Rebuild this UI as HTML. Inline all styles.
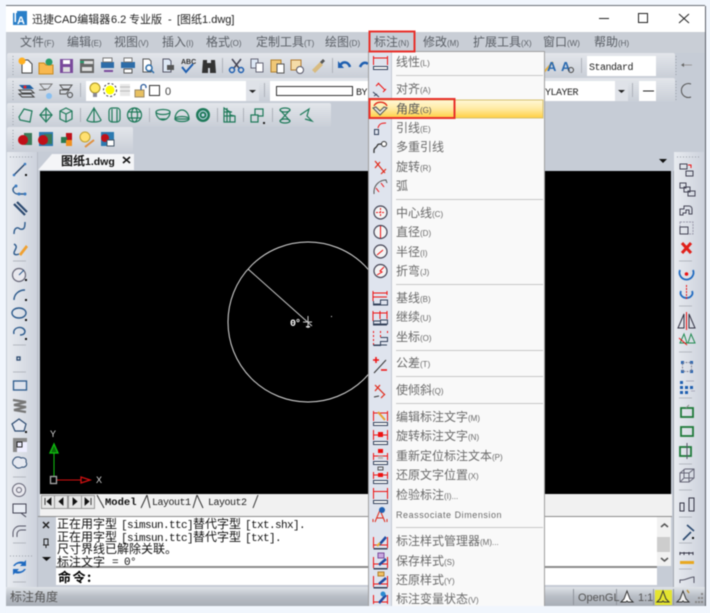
<!DOCTYPE html>
<html><head><meta charset="utf-8"><style>
html,body{margin:0;padding:0;width:710px;height:613px;overflow:hidden;background:#f1f6fd}
svg{position:absolute;left:0;top:0;filter:blur(.4px)}
text{font-family:"Liberation Sans","Noto Sans CJK SC",sans-serif}
.m{font-size:12px;fill:#5a5f66}.m tspan{font-size:8px}
.i{font-size:12px;fill:#6a6a6a}.i tspan{font-size:8px}
.c{font-size:12px;fill:#111;font-family:"Noto Sans CJK SC",sans-serif}
.t{font-size:11px;letter-spacing:-.6px;fill:#111;font-family:"Liberation Mono",monospace}
.u{font-size:10px;letter-spacing:-.5px;fill:#222;font-family:"Liberation Mono",monospace}
.s{stroke:#1f7a5a;stroke-width:1.2;fill:none}
.n{stroke:#333;stroke-width:1;fill:none}
.b{stroke:#2c5a8c;stroke-width:1.4;fill:none}
.r{stroke:#e11;stroke-width:1;fill:none}
.d{stroke:#33415a;stroke-width:1;fill:none}
.sp{stroke:#b4b8c0;stroke-width:1}
.ms{stroke:#c8c8c8;stroke-width:1}
</style></head><body>
<svg width="710" height="613" viewBox="0 0 710 613" xmlns="http://www.w3.org/2000/svg">
<defs>
<linearGradient id="tb" x1="0" y1="0" x2="0" y2="1"><stop offset="0" stop-color="#e3e6eb"/><stop offset="1" stop-color="#c9ced7"/></linearGradient>
<linearGradient id="lt" x1="0" y1="0" x2="1" y2="0"><stop offset="0" stop-color="#e8ebf0"/><stop offset="1" stop-color="#cdd2dc"/></linearGradient>
<linearGradient id="st" x1="0" y1="0" x2="0" y2="1"><stop offset="0" stop-color="#dfe3e8"/><stop offset=".5" stop-color="#b8bdc5"/><stop offset="1" stop-color="#a9aeb6"/></linearGradient>
<linearGradient id="hl" x1="0" y1="0" x2="0" y2="1"><stop offset="0" stop-color="#fff8d8"/><stop offset=".5" stop-color="#ffeaa0"/><stop offset="1" stop-color="#ffcf40"/></linearGradient>
</defs>

<!-- window -->
<rect x="6" y="5" width="699" height="601" fill="#c6ccd6"/>
<rect x="6" y="5" width="699" height="1" fill="#6c7078"/>
<rect x="705" y="6" width="1" height="600" fill="#5c6068"/>
<rect x="6" y="6" width="699" height="26" fill="#fff"/>
<!-- title -->
<rect x="13" y="11" width="14" height="14" fill="#2a7fc8"/><rect x="13" y="11" width="4" height="2" fill="#fff"/><rect x="14.500" y="13" width="1.500" height="9" fill="#fff"/>
<text x="17" y="24" style="font-size:11px;fill:#fff;font-weight:bold">A</text>
<g fill="#222">
<text x="32" y="23" style="font-size:11px">迅捷CAD编辑器</text>
<text x="111" y="23" style="font-size:11px">6.2</text>
<text x="129" y="23" style="font-size:11px">专业版</text>
<text x="168" y="23" style="font-size:11px">-</text>
<text x="177" y="23" style="font-size:11px">[图纸1.dwg]</text>
</g>
<path d="M599 18.500H609" stroke="#222"/><rect x="638.500" y="13.500" width="9" height="9" fill="none" stroke="#222"/><path d="M679 14L689 23M689 14L679 23" stroke="#222"/>
<!-- menubar -->
<rect x="6" y="32" width="699" height="21" fill="#c9ced6"/>
<text class="m" x="20" y="46">文件<tspan>(F)</tspan></text>
<text class="m" x="67" y="46">编辑<tspan>(E)</tspan></text>
<text class="m" x="114" y="46">视图<tspan>(V)</tspan></text>
<text class="m" x="162" y="46">插入<tspan>(I)</tspan></text>
<text class="m" x="206" y="46">格式<tspan>(O)</tspan></text>
<text class="m" x="256" y="46">定制工具<tspan>(T)</tspan></text>
<text class="m" x="325" y="46">绘图<tspan>(D)</tspan></text>
<text class="m" x="374" y="46">标注<tspan>(N)</tspan></text>
<text class="m" x="423" y="46">修改<tspan>(M)</tspan></text>
<text class="m" x="473" y="46">扩展工具<tspan>(X)</tspan></text>
<text class="m" x="543" y="46">窗口<tspan>(W)</tspan></text>
<text class="m" x="594" y="46">帮助<tspan>(H)</tspan></text>

<!-- toolbars bg -->
<rect x="7" y="53" width="668" height="25" rx="2" fill="url(#tb)"/>
<rect x="7" y="78" width="668" height="24" rx="2" fill="url(#tb)"/>
<rect x="7" y="103" width="324" height="24" rx="2" fill="url(#tb)"/>
<rect x="7" y="127" width="126" height="25" rx="2" fill="url(#tb)"/>
<path d="M13 56V75M13 81V100M13 106V125M13 130V149M676 56V75M676 81V100" stroke="#9aa0a8" stroke-dasharray="1 2"/>

<!-- row1 -->
<g>
<path d="M22 60h6l4 4v9H22z" fill="#fff" stroke="#444"/><circle cx="22" cy="61" r="3.500" fill="#ffb020"/>
<path d="M39 63h5l2 2h7v9H39z" fill="#f8b850" stroke="#c88a20"/><circle cx="49" cy="62" r="3.500" fill="#2a9a6a"/>
<rect x="60" y="59" width="13" height="14" fill="#7a4a9c"/><rect x="63" y="60" width="7" height="4" fill="#fff"/><rect x="63" y="67" width="7" height="5" fill="#ddd"/>
<rect x="80" y="59" width="14" height="14" fill="#666"/><rect x="84" y="61" width="9" height="3" fill="#ddd"/><rect x="82" y="67" width="10" height="4" fill="#ddd"/><path d="M80 62h4" stroke="#2a9a6a" stroke-width="2"/>
<rect x="101" y="62" width="13" height="6" fill="#2c6ca8"/><rect x="103" y="58" width="9" height="4" fill="#fff" stroke="#777"/><path d="M104 71h9" stroke="#7a4a9c" stroke-width="2"/>
<rect x="121" y="62" width="14" height="6" fill="#2c6ca8"/><rect x="124" y="58" width="8" height="4" fill="#fff" stroke="#777"/><rect x="124" y="69" width="8" height="4" fill="#fff" stroke="#555"/>
<path d="M143 59h6l2 2v11h-8z" fill="#fff" stroke="#555"/><circle cx="149" cy="68" r="3" fill="#fff" stroke="#2c6ca8" stroke-width="1.500"/><path d="M151 70l3 3" stroke="#2c6ca8" stroke-width="1.500"/>
<path d="M163 59h6l2 2v11h-8z" fill="#dde8f5" stroke="#556"/><rect x="167" y="65" width="7" height="5" fill="#555"/>
<text x="181" y="64" style="font-size:7px;font-weight:bold;fill:#333">ABC</text><path d="M182 67l4 5 7-8" stroke="#1f5fb0" stroke-width="2" fill="none"/>
<path d="M203 60h4v3h4v-3h4l1 13h-6v-5h-2v5h-6z" fill="#333"/>
<rect x="222" y="58" width="1" height="15" fill="#aeb2ba"/>
<path d="M232 59l7 9M241 59l-7 9" stroke="#445" stroke-width="1.500"/><circle cx="232" cy="70" r="2.500" fill="none" stroke="#1f5fb0" stroke-width="1.500"/><circle cx="241" cy="70" r="2.500" fill="none" stroke="#1f5fb0" stroke-width="1.500"/>
<rect x="251" y="59" width="7" height="9" fill="#dde8f5" stroke="#667"/><rect x="256" y="63" width="7" height="9" fill="#fff" stroke="#667"/>
<rect x="271" y="60" width="10" height="12" fill="#f0c878" stroke="#b08030"/><rect x="277" y="64" width="7" height="9" fill="#fff" stroke="#555"/>
<rect x="291" y="60" width="10" height="10" fill="#f5dca8" stroke="#b07a30"/><circle cx="300" cy="70" r="3.500" fill="#fff" stroke="#556"/>
<path d="M312 70l8-8 3 3-8 8z" fill="#d8bb80"/><path d="M320 62l3-3 2 2-3 3z" fill="#555"/>
<rect x="332" y="58" width="1" height="15" fill="#aeb2ba"/>
<path d="M340 66c2-5 8-5 10 1" stroke="#1f5fb0" stroke-width="2.500" fill="none"/><path d="M338 61v7h6z" fill="#1f5fb0"/>
<path d="M360 67c2-5 6-5 8-3" stroke="#1f5fb0" stroke-width="2.500" fill="none"/>
<path d="M544 72l9-10" stroke="#e8b040" stroke-width="2"/><text x="547" y="71" style="font-size:13px;font-weight:bold;fill:#2a6ab0">A</text>
<text x="561" y="71" style="font-size:13px;font-weight:bold;fill:#2a6ab0">A</text><circle cx="571" cy="70" r="2.500" fill="none" stroke="#444"/>
<rect x="581" y="58" width="1" height="15" fill="#aeb2ba"/>
<rect x="587" y="56" width="69" height="20" fill="#fff"/>
<text class="u" x="589" y="70">Standard</text>
<path d="M682 65h10" stroke="#999"/><path d="M681 65l3-2v4z" fill="#666"/>
</g>

<!-- row2 -->
<g>
<path d="M19 85l11 0 4 4-11 0z" fill="#1f5fa0"/><circle cx="25" cy="87" r="1.500" fill="#e22"/><path d="M19 90h12l3 3H22zM19 94h12l3 3H22z" fill="none" stroke="#444"/>
<path d="M40 84h12l-4 5H44z" fill="none" stroke="#777"/><circle cx="49" cy="96" r="3" fill="#8ac0f0"/><path d="M39 90h7" stroke="#777"/>
<path d="M60 85h12l-3 4H63zM60 90h9l-3 4h-6z" fill="none" stroke="#555"/><circle cx="70" cy="95" r="2.500" fill="none" stroke="#444"/>
<rect x="80" y="83" width="1" height="14" fill="#aeb2ba"/>
<rect x="86" y="81" width="173" height="20" fill="#fff"/>
<rect x="246" y="81" width="13" height="20" fill="#dfe2e8"/><path d="M249 90h7l-3.500 3z" fill="#222"/>
<circle cx="95" cy="88" r="5" fill="#ffe860" stroke="#a89020"/><rect x="93" y="93" width="4" height="4" fill="#889"/>
<circle cx="110" cy="90" r="4.500" fill="#ff0"/><circle cx="110" cy="90" r="6.500" fill="none" stroke="#333" stroke-dasharray="2 2"/>
<rect x="120" y="84" width="10" height="12" fill="#e8e8e8"/><path d="M120 87h10M120 91h10" stroke="#bbb"/>
<rect x="135" y="90" width="9" height="7" fill="#e8c060" stroke="#986"/><path d="M141 90v-3a2.500 2.500 0 0 1 5 0v1" stroke="#2a5a9a" fill="none" stroke-width="1.300"/>
<rect x="149.500" y="85.500" width="10" height="10" fill="#fff" stroke="#333"/>
<text x="165" y="95" style="font-size:11px;fill:#444">0</text>
<rect x="264" y="83" width="1" height="14" fill="#aeb2ba"/>
<rect x="270" y="81" width="99" height="20" fill="#fff"/>
<rect x="276.500" y="86.500" width="76" height="9" fill="#fff" stroke="#333"/>
<text class="u" x="356" y="95">BY</text>
<rect x="544" y="81" width="84" height="20" fill="#fff"/>
<text class="u" x="545" y="95">YLAYER</text>
<rect x="615" y="81" width="13" height="20" fill="#dfe2e8"/><path d="M618 90h7l-3.500 3z" fill="#222"/>
<rect x="632" y="83" width="1" height="14" fill="#aeb2ba"/>
<rect x="639" y="81" width="17" height="20" fill="#fff"/><path d="M643 91h11" stroke="#222"/>
<path d="M691 84a7 7 0 1 0 0 13" stroke="#555" fill="none"/>
</g>

<!-- row3 -->
<g>
<path d="M24 109l8 2-2 11-10-2-1-3z" class="s"/>
<path d="M46 108l6 7-6 7-6-7zM46 108v14M40 115h12" class="s"/>
<path d="M66 108l6 3v8l-6 3-6-3v-8zM60 111l6 3 6-3M66 114v8" class="s"/>
<rect x="80" y="108" width="1" height="14" fill="#aeb2ba"/>
<path d="M94 108l7 12a7 2 0 0 1-14 0zM94 108v14" class="s"/>
<rect x="109" y="108" width="11" height="14" rx="3" class="s"/><path d="M112 109v13M117 109v13" class="s"/>
<circle cx="134.500" cy="115" r="7" class="s"/><ellipse cx="134.500" cy="115" rx="3" ry="7" class="s"/><path d="M128 112h13M128 118h13" class="s"/>
<rect x="149" y="108" width="1" height="14" fill="#aeb2ba"/>
<ellipse cx="163" cy="112" rx="7" ry="2.500" class="s"/><path d="M156 112a7 8 0 0 0 14 0M159 119h8" class="s"/>
<path d="M175 119a7 9 0 0 1 14 0z" class="s"/><ellipse cx="182" cy="119" rx="7" ry="2.500" class="s"/>
<circle cx="203" cy="115" r="7" fill="#1f7a5a"/><circle cx="203" cy="115" r="4" fill="none" stroke="#cde"/><circle cx="203" cy="115" r="1.500" fill="#cde"/>
<rect x="217" y="108" width="1" height="14" fill="#aeb2ba"/>
<path d="M224 108v14h11v-6l-5-1v-3l-3-2zM224 112h8M224 116h10M227 108v14M230 111v11" class="s"/>
<rect x="243" y="108" width="1" height="14" fill="#aeb2ba"/>
<path d="M251 115h7v7h-7zM255 115v-6h8v7h-5" class="s"/><rect x="263" y="122" width="2" height="2" fill="#222"/>
<rect x="272" y="108" width="1" height="14" fill="#aeb2ba"/>
<ellipse cx="285" cy="110" rx="5" ry="2" class="s"/><ellipse cx="285" cy="121" rx="5" ry="2" class="s"/><path d="M280 110l10 11M290 110l-10 11" class="s"/>
<path d="M300 115l9-6-2 7 5 5-7-2" class="s"/>
</g>

<!-- row4 -->
<g>
<rect x="24" y="133" width="8" height="12" fill="#3a7a58"/><circle cx="23" cy="140" r="5" fill="#c01018"/>
<rect x="39" y="132" width="14" height="14" fill="#2c7ab0"/><rect x="44" y="134" width="8" height="10" fill="#3a7a58"/><circle cx="43" cy="140" r="5" fill="#c01018"/>
<rect x="66" y="133" width="6" height="7" fill="#c01018"/><rect x="61" y="137" width="6" height="6" fill="#2a7a50"/><rect x="66" y="140" width="6" height="6" fill="#f09020"/>
<circle cx="85" cy="137" r="5" fill="#ffe070" stroke="#c0a030"/><path d="M85 147l9-7" stroke="#e09040" stroke-width="2"/>
<rect x="101" y="132" width="13" height="14" fill="#2c7ab0"/><circle cx="105" cy="138" r="4" fill="#c01018"/><rect x="107" y="140" width="7" height="6" fill="#fff" stroke="#456"/>
</g>

<!-- tab row -->
<rect x="6" y="152" width="699" height="19" fill="#c6ccd6"/>
<path d="M38 170l14-16h82v16z" fill="#f4f5f7"/>
<text x="61" y="165" style="font-size:12px;font-weight:bold;fill:#111">图纸<tspan style="font-size:10.500px">1.dwg</tspan></text>
<path d="M123 157l7 6M130 157l-7 6" stroke="#111" stroke-width="1.500"/>
<path d="M659 159h8l-4 4z" fill="#111"/>

<!-- canvas -->
<rect x="40" y="171" width="631" height="323" fill="#000"/>
<circle cx="308" cy="322" r="80" fill="none" stroke="#ddd"/>
<path d="M248 269L312 326M308 316v12M303 322h9" stroke="#ccc"/><rect x="306" y="326" width="4" height="1.500" fill="#ddd"/><rect x="331" y="316" width="1" height="1" fill="#ddd"/>
<text x="290" y="326" style="font-size:10px;fill:#fff;font-weight:bold;letter-spacing:-1px;font-family:'Liberation Mono',monospace">0°</text>
<!-- ucs -->
<path d="M54 477V453" stroke="#10c010"/><path d="M54 444l4 9h-8z" fill="#0a6a0a" stroke="#10c010" stroke-width="1.300"/>
<path d="M57 480H81" stroke="#d01010"/><path d="M90 480l-9-3v6z" fill="none" stroke="#d01010" stroke-width="1.300"/>
<rect x="50.500" y="476.500" width="6" height="7" fill="none" stroke="#aaa" stroke-width="1.300"/>
<text x="50" y="437" style="font-size:9px;fill:#ddd">Y</text><text x="96" y="483" style="font-size:9px;fill:#ddd">X</text>

<!-- layout tabs -->
<rect x="38" y="494" width="634" height="22" fill="#f1f1f1"/>
<rect x="38" y="494" width="2" height="22" fill="#c6ccd6"/>
<g fill="#e6e6e6" stroke="#999"><rect x="41.500" y="495.500" width="13" height="13"/><rect x="54.500" y="495.500" width="13" height="13"/><rect x="68.500" y="495.500" width="13" height="13"/><rect x="81.500" y="495.500" width="13" height="13"/></g>
<path d="M45 498v7M51 498l-4 3.500 4 3.500zM63 498l-4 3.500 4 3.500zM73 498l4 3.500-4 3.500zM85 498l4 3.500-4 3.500zM91 498v7" fill="#111" stroke="#111" stroke-width=".8"/>
<path d="M97 495l7 13M147 495l-6 13M147 495l3 13M197 495l-4 13M197 495l6 13M258 495l-5 13" stroke="#333" fill="none"/>
<text x="105" y="505" style="font-size:10.500px;font-weight:bold;fill:#111;font-family:'Liberation Mono',monospace">Model</text>
<text x="152" y="505" class="u">Layout1</text>
<text x="208" y="505" class="u">Layout2</text>

<!-- command -->
<rect x="38" y="516" width="634" height="71" fill="#c6ccd6"/>
<rect x="56" y="516" width="601" height="51" fill="#fff"/>
<rect x="56" y="568" width="601" height="17" fill="#fff"/>
<rect x="38" y="516" width="634" height="1" fill="#8c8c8c"/>
<rect x="56" y="566" width="601" height="2" fill="#8c8c8c"/>
<path d="M43 522l6 6M49 522l-6 6" stroke="#222" stroke-width="1.500"/>
<path d="M44 539h4v6h-4zM46 545v3M43 545h6" stroke="#222" fill="none"/>
<path d="M42 557h9l-4.500 4z" fill="#111"/>
<g>
<text class="c" x="57" y="528">正在用字型</text><text class="t" x="121" y="528">[simsun.ttc]</text><text class="c" x="193" y="528">替代字型</text><text class="t" x="245" y="528">[txt.shx].</text>
<text class="c" x="57" y="541">正在用字型</text><text class="t" x="121" y="541">[simsun.ttc]</text><text class="c" x="193" y="541">替代字型</text><text class="t" x="245" y="541">[txt].</text>
<text class="c" x="57" y="553">尺寸界线已解除关联。</text>
<text class="c" x="57" y="566">标注文字</text><text class="t" x="112" y="565">= 0°</text>
<text class="c" x="58" y="582" style="font-weight:bold;font-size:13px;letter-spacing:1.500px;fill:#000">命令:</text>
</g>
<!-- scrollbar -->
<rect x="657" y="517" width="14" height="49" fill="#f1f1f1"/>
<rect x="657" y="537" width="13" height="15" fill="#cdcdcd"/>
<path d="M661 527l3.500-3 3.500 3M661 558l3.500 3 3.500-3" stroke="#555" stroke-width="1.500" fill="none"/>

<!-- left toolbar -->
<rect x="7" y="152" width="30" height="435" fill="url(#lt)"/>
<rect x="37" y="152" width="1" height="435" fill="#b8bdc6"/>
<path d="M10 157H34M10 556H34" stroke="#9aa0a8" stroke-dasharray="1 2"/>
<g class="sep"><path class="sp" d="M13 261H26M13 345H26M13 372H26M13 477H26M13 543H26M13 582H26"/></g>
<g>
<path d="M14 175l11-11" stroke="#2c4a70" stroke-width="1.500"/><circle cx="14" cy="175" r="1.300" fill="#3a7ac0"/><circle cx="25" cy="164" r="1.300" fill="#3a7ac0"/><rect x="25" y="174" width="2" height="2" fill="#111"/>
<path d="M16 186c-6 3-2 8 2 8h7" class="b"/><circle cx="16" cy="186" r="1.500" fill="#3a7ac0"/><circle cx="19" cy="194" r="1.500" fill="#3a7ac0"/><circle cx="25" cy="194" r="1.500" fill="#3a7ac0"/>
<path d="M14 204l11 11M17 202l10 10" stroke="#2c4a70" stroke-width="2.200"/>
<path d="M14 234c0-7 4-7 6-5 4 1 5-1 5-7" class="b"/>
<path d="M14 244c5 3 0 6 0 9 0 2 3 2 5 1" class="b"/><path d="M19 254l7-9 2 2-7 9z" fill="#f0a030"/>
<circle cx="19" cy="275" r="6.500" fill="#e8e8ee" stroke="#667" stroke-width="1.200"/><path d="M19 275l5-5" stroke="#2c5a8c"/><rect x="25" y="279" width="2" height="2" fill="#111"/>
<path d="M14 300c0-6 5-10 11-10" class="b"/><rect x="25" y="299" width="2" height="2" fill="#111"/>
<ellipse cx="19" cy="313" rx="7" ry="5" class="b"/><rect x="25" y="319" width="2" height="2" fill="#111"/>
<path d="M14 334c-2-7 9-9 11-3 0 3-2 4-5 4" class="b"/><rect x="25" y="338" width="2" height="2" fill="#111"/>
<rect x="17" y="357" width="3" height="3" fill="none" stroke="#2c4a70" stroke-width="1.300"/>
<rect x="13.500" y="381" width="13" height="9" fill="#dde2ec" stroke="#2c5a8c" stroke-width="1.300"/>
<path d="M13 400l13 2-12 3 12 2-12 3 12 2" stroke="#777" stroke-width="2.200" fill="none"/>
<path d="M19 419l7 5-2 7H15l-3-7z" fill="#e5e8f0" stroke="#2c4a70" stroke-width="1.200"/><rect x="25" y="431" width="2" height="2" fill="#111"/>
<rect x="13" y="438" width="14" height="14" fill="#888"/><path d="M17 442h10v10H17z" fill="#eef"/><rect x="17" y="442" width="5" height="5" fill="none" stroke="#222"/>
<path d="M14 459c2-3 6-2 7-1 3-1 6 1 5 4 2 3-1 6-4 5-3 2-6 1-7-1-3-1-3-5-1-7z" fill="#e5e8f0" stroke="#2c4a70"/>
<circle cx="19" cy="490" r="6.500" fill="#e8e8ee" stroke="#667"/><circle cx="19" cy="490" r="2.500" fill="none" stroke="#667"/>
<rect x="13" y="504" width="13" height="9" fill="#e8ecf3" stroke="#445"/><path d="M21 513l5 4" stroke="#445"/>
<path d="M13 537v-4a7 7 0 0 1 7-7h6M17 537v-3a4 4 0 0 1 4-4h5" stroke="#556" fill="none"/>
<path d="M13 566c3-5 9-5 11-4l2-2v6h-6l2-2c-3-1-6 0-7 2zM26 569c-3 5-9 5-11 4l-2 2v-6h6l-2 2c3 1 6 0 7-2z" fill="#1f6ac0"/>
</g>

<!-- right toolbar -->
<rect x="674" y="152" width="30" height="435" fill="url(#lt)"/>
<rect x="673" y="171" width="1" height="416" fill="#a4a9b2"/>
<path d="M677 157H700" stroke="#9aa0a8" stroke-dasharray="1 2"/>
<path class="sp" d="M679 261H692M679 306H692M679 352H692M679 398H692M679 464H692M679 490H692M679 517H692M679 543H692M679 569H692"/>
<g>
<rect x="680" y="164" width="7" height="5" fill="none" stroke="#445"/><rect x="686" y="171" width="7" height="5" fill="none" stroke="#445"/><path d="M688 165h3v3" stroke="#e11" fill="none"/>
<rect x="680" y="183" width="6" height="5" fill="none" stroke="#445"/><rect x="688" y="191" width="7" height="5" fill="none" stroke="#445"/><rect x="684" y="187" width="6" height="5" fill="none" stroke="#445"/>
<path d="M680 215v-6h4v-3h5a3 3 0 0 1 3 3v5h-3v-4h-3v3h-3v2z" fill="none" stroke="#445"/>
<rect x="680" y="222" width="13" height="12" fill="none" stroke="#99a" stroke-dasharray="2 1"/><rect x="680" y="227" width="8" height="7" fill="none" stroke="#445"/>
<path d="M682 243l9 10M691 243l-9 10" stroke="#e0201a" stroke-width="3"/>
<path d="M680 270a7 7 0 1 0 13 0" stroke="#1f6ac0" stroke-width="1.800" fill="none"/><circle cx="686.500" cy="274" r="1.800" fill="#e11"/>
<path d="M681 291a6 5 0 1 0 11 0" stroke="#1f6ac0" stroke-width="1.800" fill="none"/><path d="M686.500 285v15" stroke="#e11" stroke-dasharray="2 1"/>
<path d="M684 314l-6 14h6zM689 314l6 14h-6z" fill="none" stroke="#334"/><path d="M686.500 312v18" stroke="#e11"/>
<path d="M680 343l4-9 3 9zM688 343l3-9 4 9z" fill="none" stroke="#1f8a50"/><path d="M679 338l8 7" stroke="#e11"/>
<g fill="#1f5fb0"><rect x="681" y="361" width="3" height="3"/><rect x="690" y="361" width="3" height="3"/><rect x="681" y="370" width="3" height="3"/><rect x="690" y="370" width="3" height="3"/></g><rect x="682.500" y="362.500" width="9" height="9" fill="none" stroke="#889" stroke-dasharray="2 1"/>
<g fill="#1f5fb0"><rect x="680" y="381" width="3" height="3"/><rect x="685" y="386" width="3" height="3"/><rect x="680" y="386" width="3" height="3"/><rect x="685" y="391" width="3" height="3"/><rect x="680" y="391" width="3" height="3"/><rect x="690" y="386" width="3" height="3"/></g><path d="M686 381h8M691 391h4" stroke="#aab"/>
<rect x="681" y="408" width="12" height="9" fill="none" stroke="#1f7a3a" stroke-width="1.800"/><path d="M686 408l3-3" stroke="#888"/>
<rect x="681" y="427" width="12" height="9" fill="none" stroke="#1f7a3a" stroke-width="1.800"/>
<rect x="680" y="447" width="11" height="9" fill="none" stroke="#1f7a3a" stroke-width="1.800"/><path d="M687 443v16" stroke="#556"/>
<path d="M680 473h9v9h-9zM680 473l5-4h9v9l-5 4M689 473l5-4M684 469v9h10M684 478l-4 4" fill="none" stroke="#667"/>
<rect x="680" y="503" width="4" height="8" fill="none" stroke="#334"/><rect x="689" y="498" width="5" height="13" fill="none" stroke="#334"/>
<path d="M683 540l8-8M687 525l7 6" stroke="#2c4a70" stroke-width="1.600"/><rect x="692" y="537" width="2" height="2" fill="#111"/>
<path d="M680 553h13M680 552v3M684 552v3M689 552v3M693 552v3" stroke="#334"/><rect x="680" y="561" width="14" height="3" fill="#e8a820"/>
<path d="M680 583v-3h2c4 0 8-3 12-3v6" fill="none" stroke="#556"/>
</g>

<!-- status -->
<rect x="6" y="587" width="699" height="19" fill="url(#st)"/>
<text x="10" y="601" style="font-size:12px;fill:#555">标注角度</text>
<path d="M573.500 589v16M616.500 589v16M653.500 589v16M673.500 589v16" stroke="#8f949c"/>
<text x="578" y="601" style="font-size:11px;fill:#555">OpenGL</text>
<rect x="655" y="590" width="17" height="15" fill="#e4e430"/>
<path d="M627 591l3 8 3 3h-5l-1-1-1 1h-5l3-3z" fill="#fff" stroke="#333"/>
<text x="638" y="601" style="font-size:11px;fill:#555">1:1</text>
<path d="M663 591l3 8 3 3h-5l-1-1-1 1h-5l3-3z" fill="none" stroke="#333"/>
<path d="M683 591l3 8 3 3h-5l-1-1-1 1h-5l3-3z" fill="#eee" stroke="#333"/><path d="M687 590l2 3" stroke="#b8903a" stroke-width="1.500"/>
<path d="M701 594h2M698 598h2M701 598h2M695 602h2M698 602h2M701 602h2" stroke="#888" stroke-width="2"/>

<!-- menu popup -->
<rect x="368.500" y="51.500" width="176" height="555" fill="#f9f9f9" stroke="#a0a0a0"/>
<rect x="369" y="52" width="23" height="554" fill="#dfe4ee"/>
<rect x="391" y="52" width="1" height="554" fill="#c4c9d2"/>
<rect x="369" y="100" width="174" height="18" fill="url(#hl)" stroke="#d6c070"/>

<g>
<path class="ms" d="M396 75.500H543M396 199.500H543M396 284.500H543M396 350.500H543M396 376.500H543M396 403.500H543M396 527.500H543"/>
<text class="i" x="396" y="66">线性<tspan>(L)</tspan></text>
<text class="i" x="396" y="93">对齐<tspan>(A)</tspan></text>
<text class="i" x="396" y="113" style="fill:#555">角度<tspan>(G)</tspan></text>
<text class="i" x="396" y="132">引线<tspan>(E)</tspan></text>
<text class="i" x="396" y="151">多重引线</text>
<text class="i" x="396" y="171">旋转<tspan>(R)</tspan></text>
<text class="i" x="396" y="190">弧</text>
<text class="i" x="396" y="217">中心线<tspan>(C)</tspan></text>
<text class="i" x="396" y="236">直径<tspan>(D)</tspan></text>
<text class="i" x="396" y="256">半径<tspan>(I)</tspan></text>
<text class="i" x="396" y="275">折弯<tspan>(J)</tspan></text>
<text class="i" x="396" y="302">基线<tspan>(B)</tspan></text>
<text class="i" x="396" y="321">继续<tspan>(U)</tspan></text>
<text class="i" x="396" y="341">坐标<tspan>(O)</tspan></text>
<text class="i" x="396" y="367">公差<tspan>(T)</tspan></text>
<text class="i" x="396" y="394">使倾斜<tspan>(Q)</tspan></text>
<text class="i" x="396" y="421">编辑标注文字<tspan>(M)</tspan></text>
<text class="i" x="396" y="440">旋转标注文字<tspan>(N)</tspan></text>
<text class="i" x="396" y="460">重新定位标注文本<tspan>(P)</tspan></text>
<text class="i" x="396" y="479">还原文字位置<tspan>(X)</tspan></text>
<text class="i" x="396" y="499">检验标注<tspan>(I)...</tspan></text>
<text x="396" y="518" style="font-size:9px;fill:#6a6a6a;letter-spacing:.55px">Reassociate Dimension</text>
<text class="i" x="396" y="545">标注样式管理器<tspan>(M)...</tspan></text>
<text class="i" x="396" y="565">保存样式<tspan>(S)</tspan></text>
<text class="i" x="396" y="584">还原样式<tspan>(Y)</tspan></text>
<text class="i" x="396" y="603">标注变量状态<tspan>(V)</tspan></text>
</g>

<!-- menu icons -->
<g>
<path class="r" d="M373.500 56v9M387.500 56v9M373 58h15"/><rect x="373.500" y="66.500" width="14" height="3" fill="#fff" stroke="#33415a"/>
<path class="r" d="M378 83l7 7M376 86l3-3M383 92l3-3"/><path d="M373 92l6 5M374 96l3-2" stroke="#33415a" fill="none"/>
<path d="M374 106a7 6 0 0 1 13 0" stroke="#e02a1a" stroke-width="1.400" fill="none"/><path d="M373 108l7 7 7-7-3-1-4 4-4-4z" fill="#e8e8e0" stroke="#555"/>
<rect x="374.500" y="129.500" width="4" height="5" fill="none" stroke="#33415a"/><path d="M378 128c1-4 3-5 8-5" class="r"/>
<path d="M374 153v-3c0-2 2-2 3-4s1-2 5-2" stroke="#333" stroke-width="1.300" fill="none"/><circle cx="384" cy="144" r="2.500" fill="#fff" stroke="#333"/>
<path d="M375 161l10 12M375 168l5-6M381 174l5-5" stroke="#e02a1a" stroke-width="1.200" fill="none"/>
<path d="M374 194v-3a12 12 0 0 1 12-11l1 3" stroke="#555" fill="none"/><path d="M376 188l3 4M381 183l3 4" class="r"/>
<circle cx="380.500" cy="212.500" r="6.500" fill="#f4f4f4" stroke="#445" stroke-width="1.200"/><path d="M380.500 208v9M376 212.500h9" stroke="#e11" stroke-dasharray="2 1"/>
<circle cx="380.500" cy="232" r="6.500" fill="#f4f4f4" stroke="#445" stroke-width="1.200"/><path d="M380.500 226v12" stroke="#e11"/>
<circle cx="380.500" cy="251.500" r="6.500" fill="#f4f4f4" stroke="#445" stroke-width="1.200"/><path d="M377 255l6-5" stroke="#e11"/>
<circle cx="380.500" cy="271" r="6.500" fill="#f4f4f4" stroke="#445" stroke-width="1.200"/><path d="M377 275l5-3-2-1 4-4" stroke="#e11" fill="none"/>
<path class="r" d="M373 293h14M373 291v10M387 291v4M373 297h14"/><path class="d" d="M373.500 305v-1h7v-4h7v5h-14zM373.500 301v4"/>
<path class="r" d="M373 313h14M373 311v10M380 311v8M387 311v8"/><path class="d" d="M373.500 324v-3h7v3zM380.500 324v-4h7v4zM373 325h14"/>
<path d="M373.500 331v14M380.500 331v6M387.500 331v4" stroke="#e11" stroke-dasharray="2 2"/><path class="d" d="M373.500 345.500h7v-4h7v-4h-7M373 345h14"/>
<path d="M374 373l12-13" stroke="#333"/><path d="M373 360h6M376 357v6M381 370h6" stroke="#e11" stroke-width="1.500"/>
<path d="M375 385l10 10M375 391l5-6M381 398l4-4" stroke="#e02a1a" stroke-width="1.200" fill="none"/><path d="M374 397l5-1" stroke="#333"/>
<path d="M373.500 411v10M387.500 411v10M373 413h14" class="r"/><rect x="373.500" y="422.500" width="14" height="3" fill="#fff" stroke="#33415a"/><path d="M378 412l7 8" stroke="#e8a030" stroke-width="2"/>
<path d="M373.500 430v10M387.500 430v10M373 435h14" class="r"/><rect x="378" y="432" width="5" height="5" fill="#e11"/><rect x="373.500" y="441.500" width="14" height="3" fill="#fff" stroke="#33415a"/>
<path d="M373.500 453v7M387.500 453v7M373 456h14" class="r"/><rect x="378" y="449" width="5" height="4" fill="#e11"/><rect x="378" y="456" width="5" height="3" fill="#bbb"/><rect x="373.500" y="461.500" width="14" height="3" fill="#fff" stroke="#33415a"/>
<rect x="378" y="467" width="5" height="3" fill="none" stroke="#555"/><path d="M373.500 472v7M387.500 472v7M373 475h14" class="r"/><rect x="378" y="473" width="5" height="4" fill="#e11"/><rect x="373.500" y="480.500" width="14" height="3" fill="#fff" stroke="#33415a"/>
<path d="M373.500 488v11M387.500 488v11M373 491.500h14" class="r"/><rect x="373.500" y="500.500" width="14" height="3" fill="#fff" stroke="#33415a"/>
<path d="M375 522l5-12 5 12M377 518h6M373 519v3M387 519v3" stroke="#e02a1a" fill="none"/><circle cx="382" cy="510" r="3" fill="#1f5fb0"/>
<path d="M373.500 537v11M387.500 537v11M373 545h14" class="r"/><rect x="373.500" y="548" width="14" height="1.500" fill="#33415a"/><path d="M379 545l7-8" stroke="#1f4aa0" stroke-width="2.500"/><path d="M377 546l3-3" stroke="#e8b030" stroke-width="2"/>
<path d="M373.500 557v11M387.500 557v11M373 564h14" class="r"/><rect x="373.500" y="568" width="14" height="1.500" fill="#33415a"/><path d="M379 565l7-6" stroke="#1f4aa0" stroke-width="2.500"/><rect x="378" y="553" width="6" height="5" fill="#c8a8e0" stroke="#7a4a9c"/>
<path d="M373.500 576v11M387.500 576v11M373 584h14" class="r"/><rect x="373.500" y="587" width="14" height="1.500" fill="#33415a"/><path d="M379 584l7-6" stroke="#1f4aa0" stroke-width="2.500"/><rect x="378" y="572" width="6" height="4" fill="#f0c060" stroke="#b08030"/>
<path d="M373.500 595v9M387.500 595v9M373 602h14" class="r"/><path d="M379 603l7-8" stroke="#1f4aa0" stroke-width="2.500"/><circle cx="383" cy="594" r="2.500" fill="#2a8ad0"/>
</g>

<!-- red annotation boxes -->
<rect x="369.500" y="31.500" width="45" height="20" fill="none" stroke="#e8302a" stroke-width="2"/>
<rect x="369.500" y="99" width="85" height="19" fill="none" stroke="#e8302a" stroke-width="2"/>
<rect x="6" y="606" width="700" height="7" fill="#f1f6fd"/>
</svg>
</body></html>
